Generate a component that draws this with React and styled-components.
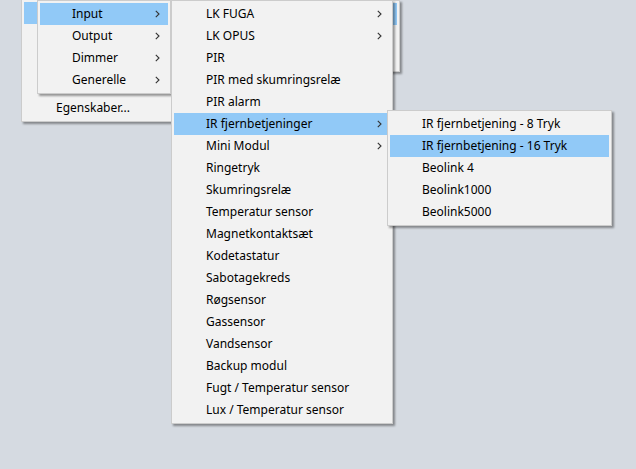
import React from 'react'
import styled, { createGlobalStyle } from 'styled-components'

const GlobalStyle = createGlobalStyle`
    html, body {
        margin: 0;
        padding: 0;
        background-color: #d5dae1;
    }
`;

const Desktop = styled.div`
    position: relative;
    width: 636px;
    height: 469px;
    overflow: hidden;
    background-color: #d5dae1;
    font-family: 'Noto Sans', 'Segoe UI', sans-serif;
    font-size: 12px;
    color: #000;
`;

const Menu = styled.div`
    position: absolute;
    left: ${(props) => props.left}px;
    top: ${(props) => props.top}px;
    width: ${(props) => props.width}px;
    z-index: ${(props) => props.z};
    box-sizing: border-box;
    display: flex;
    flex-direction: column;
    padding: 2px 2px 2px 2px;
    background-color: #f2f2f2;
    border: 1px solid #cccccc;
    box-shadow: 2px 2px 2px rgba(0, 0, 0, 0.38);
`;

const Row = styled.div`
    display: flex;
    align-items: center;
    height: 22px;
    padding-left: 32px;
    padding-right: 8px;
    background-color: ${(props) => (props.active ? '#91c9f7' : 'transparent')};
    white-space: nowrap;
`;

const Label = styled.span`
    flex: 1;
    line-height: 22px;
`;

const Separator = styled.div`
    height: 7px;
`;

const Arrow = () => (
    <svg width="5" height="8" viewBox="0 0 5 8">
        <path d="M0.8 0.8 L4 4 L0.8 7.2" fill="none" stroke="#333" strokeWidth="1.1" />
    </svg>
)

const Item = ({ label, sub, active }) => (
    <Row active={active}>
        <Label>{label}</Label>
        {sub && <Arrow />}
    </Row>
)

const inputItems = [
    { label: 'LK FUGA', sub: true },
    { label: 'LK OPUS', sub: true },
    { label: 'PIR' },
    { label: 'PIR med skumringsrelæ' },
    { label: 'PIR alarm' },
    { label: 'IR fjernbetjeninger', sub: true, active: true },
    { label: 'Mini Modul', sub: true },
    { label: 'Ringetryk' },
    { label: 'Skumringsrelæ' },
    { label: 'Temperatur sensor' },
    { label: 'Magnetkontaktsæt' },
    { label: 'Kodetastatur' },
    { label: 'Sabotagekreds' },
    { label: 'Røgsensor' },
    { label: 'Gassensor' },
    { label: 'Vandsensor' },
    { label: 'Backup modul' },
    { label: 'Fugt / Temperatur sensor' },
    { label: 'Lux / Temperatur sensor' },
]

const irItems = [
    { label: 'IR fjernbetjening - 8 Tryk' },
    { label: 'IR fjernbetjening - 16 Tryk', active: true },
    { label: 'Beolink 4' },
    { label: 'Beolink1000' },
    { label: 'Beolink5000' },
]

const App = () => {
  return (
    <>
        <GlobalStyle />
        <Desktop>
            <Menu left={21} top={-1} width={170} z={1}>
                <Item label="" active />
                <Item label="" />
                <Item label="" />
                <Item label="" />
                <Separator />
                <Item label="Egenskaber..." />
            </Menu>

            <Menu left={37} top={0} width={134} z={2}>
                <Item label="Input" sub active />
                <Item label="Output" sub />
                <Item label="Dimmer" sub />
                <Item label="Generelle" sub />
            </Menu>

            <Menu left={280} top={0} width={120} z={3}>
                <Item label="" active />
                <Item label="" />
                <Item label="" />
            </Menu>

            <Menu left={171} top={0} width={222} z={4}>
                {inputItems.map((item) => (
                    <Item key={item.label} {...item} />
                ))}
            </Menu>

            <Menu left={387} top={110} width={225} z={5}>
                {irItems.map((item) => (
                    <Item key={item.label} {...item} />
                ))}
            </Menu>
        </Desktop>
    </>
  )
}

export default App
